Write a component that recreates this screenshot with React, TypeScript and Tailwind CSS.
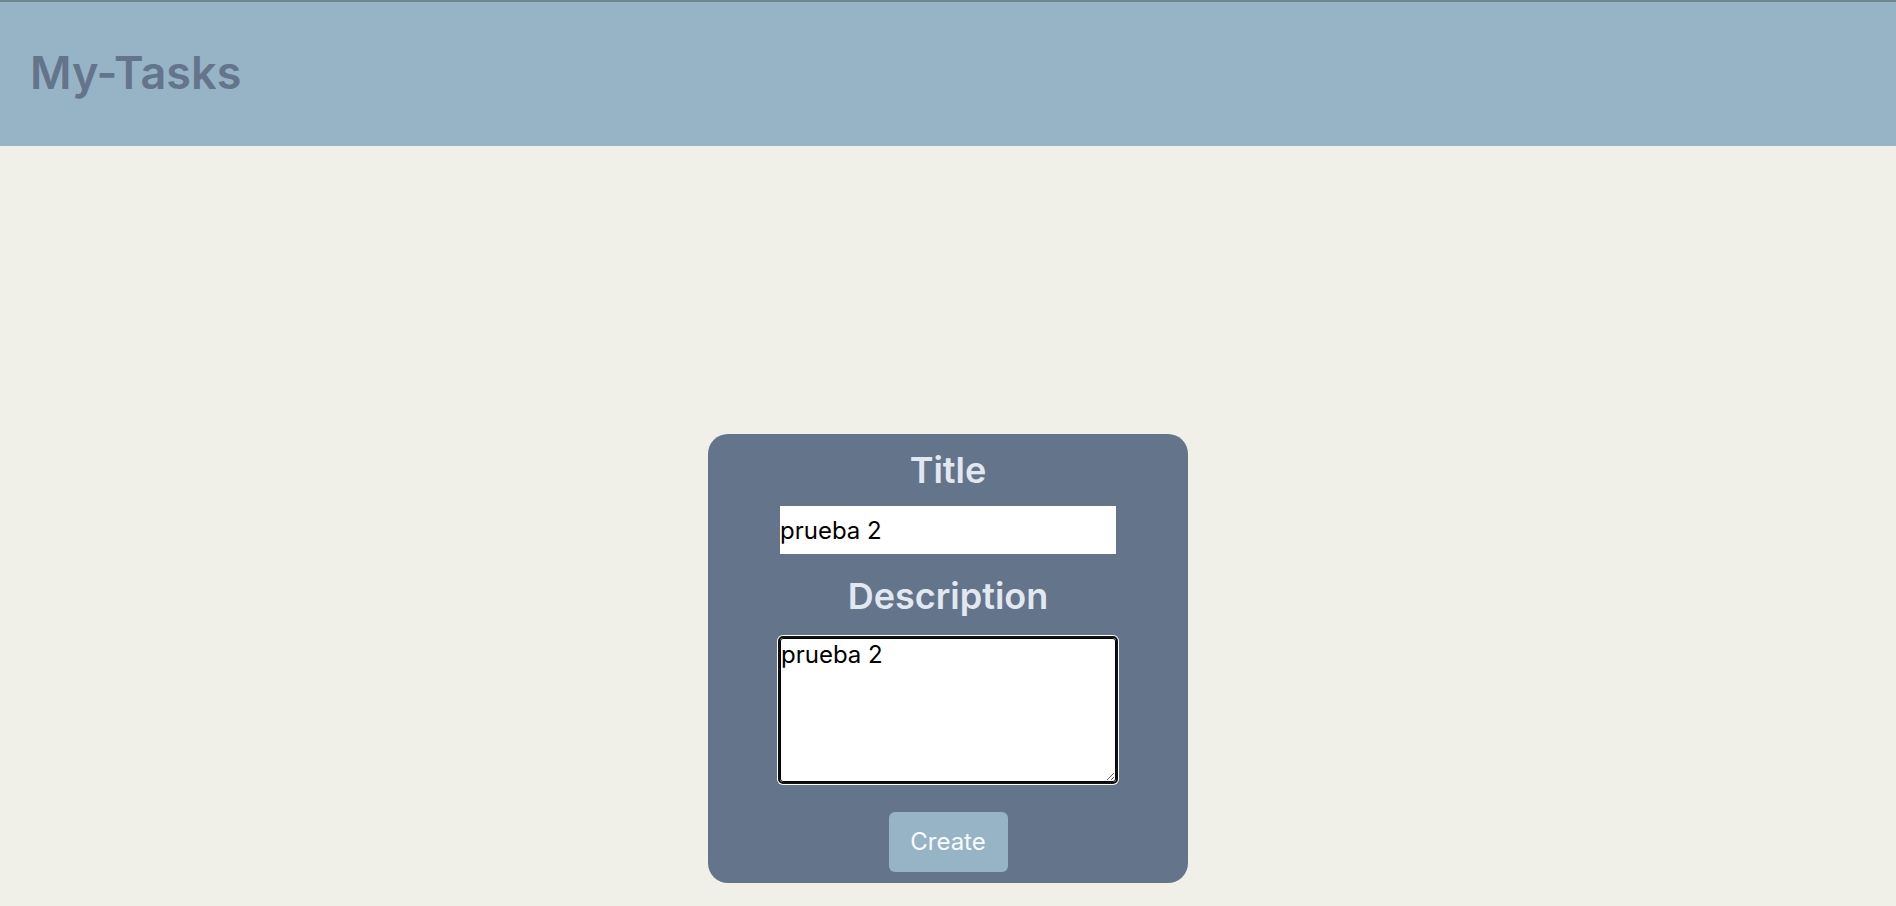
import { useState } from "react";

const App = () => {
    const [formData, setFormData] = useState({
        title: 'prueba 2',
        description: 'prueba 2',
    });

    const handleChange = (e: React.ChangeEvent<HTMLInputElement | HTMLTextAreaElement>) => {
        const { name, value } = e.target;
        setFormData((prev) => ({ ...prev, [name]: value }));
    };

    return (
        <div className="min-h-screen bg-[#f0f0e8] font-['Inter',sans-serif]">
            {/* Header */}
            <header className="h-[146px] border-t-2 border-[#6f858f] bg-[#96b4c6] flex items-center pl-[30px]">
                <h1 className="text-[45px] font-semibold text-[#64748b] leading-none pb-1">My-Tasks</h1>
            </header>

            {/* Form */}
            <main className="flex justify-center pt-[288px]">
                <form
                    className="w-[480px] h-[449px] bg-[#64748b] rounded-[20px] flex flex-col items-center pt-4"
                    onSubmit={(e) => e.preventDefault()}
                >
                    <h2 className="text-4xl leading-10 font-semibold text-[#e2e8f0]">Title</h2>
                    <input
                        type="text"
                        name="title"
                        value={formData.title}
                        onChange={handleChange}
                        className="mt-4 w-[336px] h-12 bg-white text-black text-2xl outline-none"
                    />
                    <h2 className="mt-[22px] text-4xl leading-10 font-semibold text-[#e2e8f0]">Description</h2>
                    <textarea
                        name="description"
                        value={formData.description}
                        onChange={handleChange}
                        className="mt-[22px] w-[336px] h-[144px] bg-white text-black text-2xl leading-8 border border-black rounded-[3px] outline-2 outline-[#111] shadow-[0_0_0_3px_white]"
                    />
                    <button
                        type="submit"
                        className="mt-[30px] w-[119px] h-[60px] bg-[#96b4c6] text-[#f8fafc] text-2xl rounded-md"
                    >
                        Create
                    </button>
                </form>
            </main>
        </div>
    );
};

export default App;
